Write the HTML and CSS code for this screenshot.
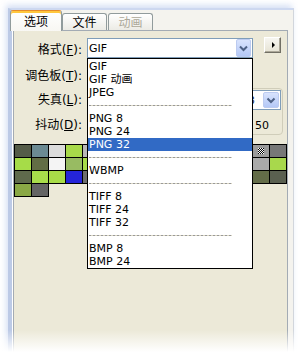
FILE: index.html
```html
<!DOCTYPE html>
<html lang="zh-CN">
<head>
    <meta charset="UTF-8">
    <meta name="viewport" content="width=device-width, initial-scale=1.0">
    <title>导出选项</title>
    <link rel="stylesheet" href="styles.css">
</head>
<body>

    <div class="shot">
        <div class="window">
            <div class="tabs">
                <div class="tab active">选项</div>
                <div class="tab">文件</div>
                <div class="tab disabled">动画</div>
            </div>

            <div class="pane">
                <div class="row">
                    <label class="label">格式(<u>F</u>):</label>
                    <div class="combo combo-format">
                        <span class="combo-text">GIF</span>
                        <span class="combo-btn">
                            <svg width="15" height="18" viewBox="0 0 15 18"><path d="M4 7.5 L7.5 11 L11 7.5" fill="none" stroke="#4d6185" stroke-width="2"/></svg>
                        </span>

                        <!-- 打开的下拉列表 -->
                        <ul class="dropdown">
                            <li>GIF</li>
                            <li>GIF 动画</li>
                            <li>JPEG</li>
                            <li class="sep"></li>
                            <li>PNG 8</li>
                            <li>PNG 24</li>
                            <li class="selected">PNG 32</li>
                            <li class="sep"></li>
                            <li>WBMP</li>
                            <li class="sep"></li>
                            <li>TIFF 8</li>
                            <li>TIFF 24</li>
                            <li>TIFF 32</li>
                            <li class="sep"></li>
                            <li>BMP 8</li>
                            <li>BMP 24</li>
                        </ul>
                    </div>
                    <button class="menu-btn"><span class="arrow"></span></button>
                </div>

                <div class="row">
                    <label class="label">调色板(<u>T</u>):</label>
                    <div class="combo combo-palette">
                        <span class="combo-text"></span>
                        <span class="combo-btn"></span>
                    </div>
                </div>

                <div class="group">
                    <div class="group-labels">
                        <label class="label label-loss">失真(<u>L</u>):</label>
                        <label class="label label-dither">抖动(<u>D</u>):</label>
                    </div>
                    <div class="group-frame">
                        <div class="combo combo-loss">
                            <span class="combo-text loss-value">3</span>
                            <span class="combo-btn">
                                <svg width="16" height="16" viewBox="0 0 16 16"><path d="M4.5 6.5 L8 10 L11.5 6.5" fill="none" stroke="#4d6185" stroke-width="2"/></svg>
                            </span>
                        </div>
                        <div class="slider-row">
                            <div class="slider"></div>
                            <span class="count">50</span>
                        </div>
                    </div>
                </div>

                <div class="swatches">
                    <div class="sw" style="background:#545b48"></div>
                    <div class="sw" style="background:#6b8a93"></div>
                    <div class="sw" style="background:#dcdcdc"></div>
                    <div class="sw" style="background:#a8da4a"></div>
                    <div class="sw" style="background:#b8b8b8"></div>
                    <div class="sw" style="background:#8fae55"></div>
                    <div class="sw" style="background:#7a7a7a"></div>
                    <div class="sw" style="background:#c4e07c"></div>
                    <div class="sw" style="background:#4f5640"></div>
                    <div class="sw" style="background:#9fc250"></div>
                    <div class="sw" style="background:#e8e8e8"></div>
                    <div class="sw" style="background:#6f7b58"></div>
                    <div class="sw" style="background:#b0d060"></div>
                    <div class="sw" style="background:#868686"></div>
                    <div class="sw transparent" style="background:#9a9a9a"></div>
                    <div class="sw" style="background:#777777"></div>

                    <div class="sw" style="background:#a6dc48"></div>
                    <div class="sw" style="background:#626d45"></div>
                    <div class="sw" style="background:#f4f4f4"></div>
                    <div class="sw" style="background:#98bb62"></div>
                    <div class="sw" style="background:#a8dc48"></div>
                    <div class="sw" style="background:#5c6648"></div>
                    <div class="sw" style="background:#cccccc"></div>
                    <div class="sw" style="background:#8aa845"></div>
                    <div class="sw" style="background:#b4d86a"></div>
                    <div class="sw" style="background:#565656"></div>
                    <div class="sw" style="background:#a0c848"></div>
                    <div class="sw" style="background:#d4d4d4"></div>
                    <div class="sw" style="background:#687448"></div>
                    <div class="sw" style="background:#b8b8b8"></div>
                    <div class="sw" style="background:#aaaaaa"></div>
                    <div class="sw" style="background:#a8d84c"></div>

                    <div class="sw" style="background:#5f6a4c"></div>
                    <div class="sw" style="background:#a9dd4b"></div>
                    <div class="sw" style="background:#a8dc48"></div>
                    <div class="sw" style="background:#2424d8"></div>
                    <div class="sw" style="background:#6e6e6e"></div>
                    <div class="sw" style="background:#9cbc5c"></div>
                    <div class="sw" style="background:#747e5c"></div>
                    <div class="sw" style="background:#bcbcbc"></div>
                    <div class="sw" style="background:#aad450"></div>
                    <div class="sw" style="background:#606060"></div>
                    <div class="sw" style="background:#94b04c"></div>
                    <div class="sw" style="background:#f0f0f0"></div>
                    <div class="sw" style="background:#5a6444"></div>
                    <div class="sw" style="background:#a4cc4c"></div>
                    <div class="sw" style="background:#636c48"></div>
                    <div class="sw" style="background:#5a6050"></div>

                    <div class="sw" style="background:#8aa845"></div>
                    <div class="sw" style="background:#646464"></div>
                </div>
            </div>
        </div>
        <div class="fade"></div>
    </div>

</body>
</html>
```

FILE: styles.css
```css
body {
    margin: 0;
    padding: 0;
    background-color: #ffffff;
    font-family: "DejaVu Sans", "Noto Sans CJK SC", sans-serif;
    font-size: 12px;
    color: #000000;
}

.shot {
    position: relative;
    width: 298px;
    height: 352px;
    overflow: hidden;
    background-color: #ffffff;
}

.window {
    margin: 8px 0 0 8px;
    width: 281px;
    height: 360px;
    border-left: 4px solid #bccae6;
    border-top: 2px solid #cdd8f0;
    border-right: 1px solid #d2d6dc;
    background-color: #f4f3ee;
    box-shadow: -2px -3px 6px rgba(165, 186, 230, 0.45);
}

/* tabs */

.tabs {
    display: flex;
    align-items: flex-end;
    height: 20px;
    margin-left: -2px;
}

.tab {
    box-sizing: border-box;
    width: 45px;
    height: 17px;
    border: 1px solid #919b9c;
    border-bottom: none;
    border-radius: 3px 3px 0 0;
    background: linear-gradient(#ffffff, #ecebe5);
    font-family: "Noto Sans CJK SC", sans-serif;
    font-size: 12px;
    line-height: 15px;
    text-align: center;
}

.tab.active {
    position: relative;
    z-index: 1;
    width: 52px;
    height: 21px;
    margin-bottom: -1px;
    border-top: 1px solid #e68b2c;
    box-shadow: inset 0 2px 0 #ffc73c;
    background: linear-gradient(#ffffff, #f8f7f3);
    line-height: 19px;
}

.tab.disabled {
    margin-left: 1px;
    color: #aca899;
}

.pane {
    box-sizing: border-box;
    width: 275px;
    height: 330px;
    margin-left: 1px;
    padding-top: 7px;
    border: 1px solid #a3abb4;
    border-bottom: none;
    background-color: #ece9d8;
    box-shadow: -1px 0 0 #ffffff;
}

/* form rows */

.row {
    display: flex;
    align-items: center;
    height: 20px;
}

.row + .row {
    margin-top: 6px;
}

.label {
    box-sizing: border-box;
    flex: none;
    width: 70px;
    margin-right: 3px;
    padding-right: 2px;
    text-align: right;
    font-family: "DejaVu Sans", "Noto Sans CJK SC", sans-serif;
    font-size: 12px;
    white-space: nowrap;
}

.combo {
    position: relative;
    box-sizing: border-box;
    display: flex;
    align-items: center;
    height: 20px;
    border: 1px solid #7f9db9;
    background-color: #ffffff;
    font-size: 11px;
}

.combo-format,
.combo-palette {
    width: 166px;
}

.combo-text {
    flex: 1;
    padding-left: 1px;
    white-space: nowrap;
}

.combo-btn {
    box-sizing: border-box;
    display: flex;
    width: 15px;
    height: 18px;
    margin-right: 1px;
    border: 1px solid #bccbf0;
    border-radius: 2px;
    background: linear-gradient(#d8e3fd, #b4c8f6);
}

.combo-btn svg {
    margin: -1px;
}

.menu-btn {
    box-sizing: border-box;
    align-self: flex-start;
    display: flex;
    align-items: center;
    justify-content: center;
    width: 17px;
    height: 16px;
    margin: -1px 0 0 11px;
    padding: 0;
    border: 1px solid;
    border-color: #ffffff #716f64 #716f64 #ffffff;
    box-shadow: inset -1px -1px 0 #aca899;
    background: linear-gradient(#f7f6f1, #e6e3d4);
}

.menu-btn .arrow {
    width: 0;
    height: 0;
    border-top: 3px solid transparent;
    border-bottom: 3px solid transparent;
    border-left: 3px solid #000000;
    margin-left: 1px;
}

/* dropdown list */

.dropdown {
    position: absolute;
    top: 19px;
    left: -1px;
    z-index: 10;
    box-sizing: border-box;
    width: 166px;
    margin: 0;
    padding: 1px 0 0;
    list-style: none;
    border: 1px solid #000000;
    background-color: #ffffff;
    font-family: "DejaVu Sans", "Noto Sans CJK SC", sans-serif;
    font-size: 11px;
}

.dropdown li {
    height: 13px;
    padding-left: 1px;
    line-height: 13px;
    white-space: nowrap;
}

.dropdown li.selected {
    background-color: #316ac5;
    color: #ffffff;
}

.dropdown li.sep {
    display: flex;
    align-items: center;
    padding-left: 1px;
    padding-right: 20px;
}

.dropdown li.sep::before {
    content: "";
    flex: 1;
    height: 1px;
    background: repeating-linear-gradient(to right, #999999 0 2px, #d9d5c2 2px 4px);
}

/* loss / dither group */

.group {
    display: flex;
    margin-top: 4px;
}

.group-labels {
    display: flex;
    flex-direction: column;
    padding-top: 2px;
}

.label-loss {
    height: 20px;
    line-height: 20px;
}

.label-dither {
    height: 18px;
    margin-top: 6px;
    line-height: 18px;
}

.group-frame {
    box-sizing: border-box;
    width: 196px;
    height: 47px;
    padding: 1px 1px 0;
    border: 1px solid #d0cdba;
    border-radius: 4px;
}

.combo-loss {
    width: 100%;
}

.loss-value {
    flex: none;
    margin-right: 8px;
    color: #23306a;
}

.combo-loss .combo-text {
    margin-left: auto;
}

.combo-loss .combo-btn {
    width: 16px;
    height: 16px;
}

.slider-row {
    display: flex;
    align-items: center;
    height: 18px;
    margin-top: 6px;
    font-size: 11px;
}

.slider {
    flex: 1;
}

.count {
    margin-right: 12px;
}

/* colour table */

.swatches {
    display: grid;
    grid-template-columns: repeat(16, 16px);
    grid-auto-rows: 12px;
    gap: 1px;
    margin: 10px 0 0 1px;
}

.sw {
    box-shadow: 0 0 0 1px #000000;
}

.sw.transparent {
    display: flex;
    align-items: center;
    justify-content: center;
}

.sw.transparent::after {
    content: "";
    width: 6px;
    height: 6px;
    background: repeating-conic-gradient(#000000 0 25%, #ffffff 0 50%) 0 0 / 2px 2px;
}

.fade {
    position: absolute;
    left: 0;
    right: 0;
    bottom: 0;
    height: 22px;
    background: linear-gradient(rgba(255, 255, 255, 0), #ffffff);
}
```
